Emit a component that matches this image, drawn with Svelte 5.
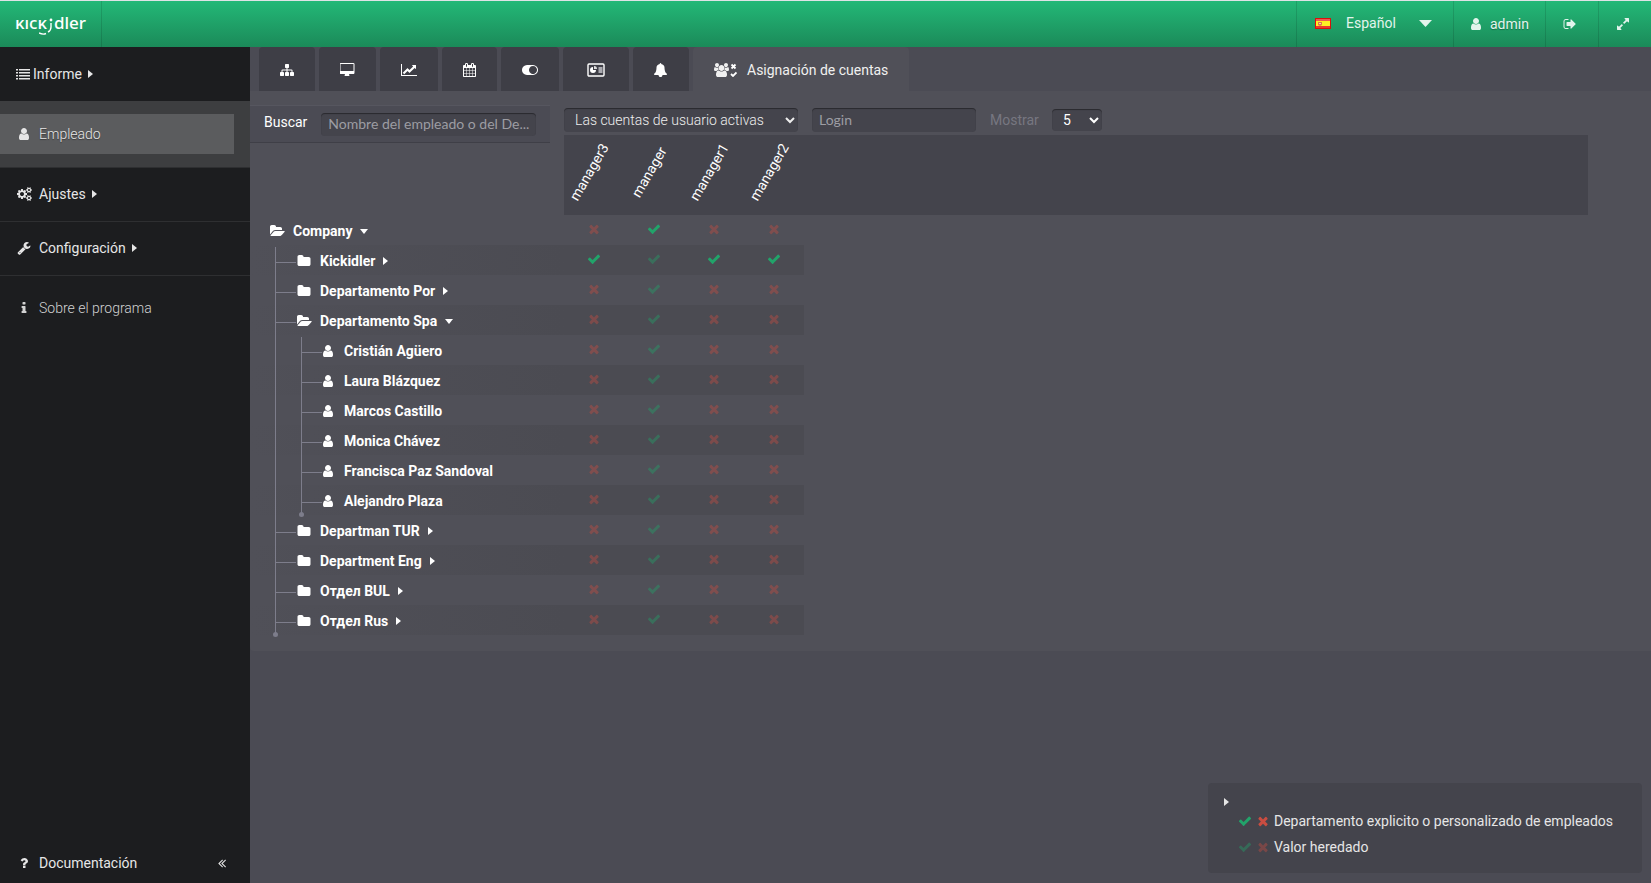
<script>
  const icons = {
    user: [1536, 'M1408 1399q0 109-62.5 187t-150.5 78h-854q-88 0-150.5-78t-62.5-187q0-85 8.5-160.5t31.5-152 58.5-131 94-89 134.5-34.5q131 128 313 128t313-128q76 0 134.5 34.5t94 89 58.5 131 31.5 152 8.5 160.5zm-256-887q0 159-112.5 271.5t-271.5 112.5-271.5-112.5-112.5-271.5 112.5-271.5 271.5-112.5 271.5 112.5 112.5 271.5z'],
    check: [1792, 'M1671 566q0 40-28 68l-724 724-136 136q-28 28-68 28t-68-28l-136-136-362-362q-28-28-28-68t28-68l136-136q28-28 68-28t68 28l294 295 656-657q28-28 68-28t68 28l136 136q28 28 28 68z'],
    times: [1792, 'M1490 1322q0 40-28 68l-136 136q-28 28-68 28t-68-28l-294-294-294 294q-28 28-68 28t-68-28l-136-136q-28-28-28-68t28-68l294-294-294-294q-28-28-28-68t28-68l136-136q28-28 68-28t68 28l294 294 294-294q28-28 68-28t68 28l136 136q28 28 28 68t-28 68l-294 294 294 294q28 28 28 68z'],
    folder: [1792, 'M1728 608v704q0 92-66 158t-158 66h-1216q-92 0-158-66t-66-158v-960q0-92 66-158t158-66h320q92 0 158 66t66 158v32h672q92 0 158 66t66 158z'],
    folderOpen: [1920, 'M1879 952q0 31-31 66l-336 396q-43 51-120.5 86.5t-143.5 35.5h-1088q-34 0-60.5-13t-26.5-43q0-31 31-66l336-396q43-51 120.5-86.5t143.5-35.5h1088q34 0 60.5 13t26.5 43zm-343-344v160h-832q-94 0-197 47.5t-164 119.5l-337 396-5 6q0-4-.5-12.5t-.5-12.5v-960q0-92 66-158t158-66h320q92 0 158 66t66 158v32h544q92 0 158 66t66 158z'],
    list: [1792, 'M0 256h256v192h-256zM384 256h1408v192h-1408zM0 640h256v192h-256zM384 640h1408v192h-1408zM0 1024h256v192h-256zM384 1024h1408v192h-1408zM0 1408h256v192h-256zM384 1408h1408v192h-1408z'],
    sitemap: [1792, 'M1792 1248v320q0 40-28 68t-68 28h-320q-40 0-68-28t-28-68v-320q0-40 28-68t68-28h96v-192h-512v192h96q40 0 68 28t28 68v320q0 40-28 68t-68 28h-320q-40 0-68-28t-28-68v-320q0-40 28-68t68-28h96v-192h-512v192h96q40 0 68 28t28 68v320q0 40-28 68t-68 28h-320q-40 0-68-28t-28-68v-320q0-40 28-68t68-28h96v-192q0-52 38-90t90-38h512v-192h-96q-40 0-68-28t-28-68v-320q0-40 28-68t68-28h320q40 0 68 28t28 68v320q0 40-28 68t-68 28h-96v192h512q52 0 90 38t38 90v192h96q40 0 68 28t28 68z'],
    desktop: [1920, 'M1728 992v-832q0-13-9.5-22.5t-22.5-9.5h-1600q-13 0-22.5 9.5t-9.5 22.5v832q0 13 9.5 22.5t22.5 9.5h1600q13 0 22.5-9.5t9.5-22.5zm128-832v1088q0 66-47 113t-113 47h-544q0 37 16 77.5t32 71 16 43.5q0 26-19 45t-45 19h-512q-26 0-45-19t-19-45q0-14 16-44t32-70 16-78h-544q-66 0-113-47t-47-113v-1088q0-66 47-113t113-47h1600q66 0 113 47t47 113z'],
    lineChart: [2048, 'M2048 1536v128h-2048v-1536h128v1408h1920zm-128-1248v435q0 21-19.5 29.5t-35.5-7.5l-121-121-633 633q-10 10-23 10t-23-10l-233-233-416 416-192-192 585-585q10-10 23-10t23 10l233 233 464-464-121-121q-16-16-7.5-35.5t29.5-19.5h435q14 0 23 9t9 23z'],
    calendar: [1664, 'M192 1664h288v-288h-288v288zm352 0h320v-288h-320v288zm-352-352h288v-320h-288v320zm352 0h320v-320h-320v320zm-352-384h288v-288h-288v288zm736 736h320v-288h-320v288zm-384-736h320v-288h-320v288zm768 736h288v-288h-288v288zm-384-352h320v-320h-320v320zm-352-864v-288q0-13-9.5-22.5t-22.5-9.5h-64q-13 0-22.5 9.5t-9.5 22.5v288q0 13 9.5 22.5t22.5 9.5h64q13 0 22.5-9.5t9.5-22.5zm736 864h288v-320h-288v320zm-384-384h320v-288h-320v288zm384 0h288v-288h-288v288zm32-480v-288q0-13-9.5-22.5t-22.5-9.5h-64q-13 0-22.5 9.5t-9.5 22.5v288q0 13 9.5 22.5t22.5 9.5h64q13 0 22.5-9.5t9.5-22.5zm384-64v1280q0 52-38 90t-90 38h-1408q-52 0-90-38t-38-90v-1280q0-52 38-90t90-38h128v-96q0-66 47-113t113-47h64q66 0 113 47t47 113v96h384v-96q0-66 47-113t113-47h64q66 0 113 47t47 113v96h128q52 0 90 38t38 90z', 64],
    toggle: [2048, 'M0 896q0-130 51-248.5t136.5-204 204-136.5 248.5-51h768q130 0 248.5 51t204 136.5 136.5 204 51 248.5-51 248.5-136.5 204-204 136.5-248.5 51h-768q-130 0-248.5-51t-204-136.5-136.5-204-51-248.5zm1408 512q104 0 198.5-40.5t163.5-109.5 109.5-163.5 40.5-198.5-40.5-198.5-109.5-163.5-163.5-109.5-198.5-40.5-198.5 40.5-163.5 109.5-109.5 163.5-40.5 198.5 40.5 198.5 109.5 163.5 163.5 109.5 198.5 40.5z'],
    bell: [1792, 'M1664 1408q0 52-38 90t-90 38h-448q0 106-75 181t-181 75-181-75-75-181h-448q-52 0-90-38t-38-90q50-42 91-88t85-119.5 74.5-158.5 50-206 19.5-260q0-152 117-282.5t307-158.5q-8-19-8-39 0-40 28-68t68-28 68 28 28 68q0 20-8 39 190 28 307 158.5t117 282.5q0 139 19.5 260t50 206 74.5 158.5 85 119.5 91 88z'],
    signOut: [1664, 'M704 1440q0 4 1 20t.5 26.5-3 23.5-10 19.5-20.5 6.5h-320q-119 0-203.5-84.5t-84.5-203.5v-704q0-119 84.5-203.5t203.5-84.5h320q13 0 22.5 9.5t9.5 22.5q0 4 1 20t.5 26.5-3 23.5-10 19.5-20.5 6.5h-320q-66 0-113 47t-47 113v704q0 66 47 113t113 47h312l11.5 1 11.5 3 8 5.5 7 9 2 13.5zm928-544q0 26-19 45l-544 544q-19 19-45 19t-45-19-19-45v-288h-448q-26 0-45-19t-19-45v-384q0-26 19-45t45-19h448v-288q0-26 19-45t45-19 45 19l544 544q19 19 19 45z'],
    expand: [1792, 'M883 1056q0 13-10 23l-332 332 144 144q19 19 19 45t-19 45-45 19h-448q-26 0-45-19t-19-45v-448q0-26 19-45t45-19 45 19l144 144 332-332q10-10 23-10t23 10l114 114q10 10 10 23zm781-864v448q0 26-19 45t-45 19-45-19l-144-144-332 332q-10 10-23 10t-23-10l-114-114q-10-10-10-23t10-23l332-332-144-144q-19-19-19-45t19-45 45-19h448q26 0 45 19t19 45z'],
    wrench: [1792, 'M448 1472q0-26-19-45t-45-19-45 19-19 45 19 45 45 19 45-19 19-45zm644-420l-682 682q-37 37-90 37-52 0-91-37l-106-108q-38-36-38-90 0-53 38-91l681-681q39 98 114.5 173.5t173.5 114.5zm634-435q0 39-23 106-47 134-164.5 217.5t-258.5 83.5q-185 0-316.5-131.5t-131.5-316.5 131.5-316.5 316.5-131.5q58 0 121.5 16.5t107.5 46.5q16 11 16 28t-16 28l-293 169v224l193 107q5-3 79-48.5t135.5-81 70.5-35.5q15 0 23.5 10t8.5 25z'],
    cogs: [1920, 'M896 896q0-106-75-181t-181-75-181 75-75 181 75 181 181 75 181-75 75-181zm768 512q0-52-38-90t-90-38-90 38-38 90q0 53 37.5 90.5t90.5 37.5 90.5-37.5 37.5-90.5zm0-1024q0-52-38-90t-90-38-90 38-38 90q0 53 37.5 90.5t90.5 37.5 90.5-37.5 37.5-90.5zm-384 421v185q0 10-7 19.5t-16 10.5l-155 24q-11 35-32 76 34 48 90 115 7 11 7 20 0 12-7 19-23 30-82.5 89.5t-78.5 59.5q-11 0-21-7l-115-90q-37 19-77 31-11 108-23 155-7 24-30 24h-186q-11 0-20-7.5t-10-17.5l-23-153q-34-10-75-31l-118 89q-7 7-20 7-11 0-21-8-144-133-144-160 0-9 7-19 10-14 41-53t47-61q-23-44-35-82l-152-24q-10-1-17-9.5t-7-19.5v-185q0-10 7-19.5t16-10.5l155-24q11-35 32-76-34-48-90-115-7-11-7-20 0-12 7-20 22-30 82-89t79-59q11 0 21 7l115 90q34-18 77-32 11-108 23-154 7-24 30-24h186q11 0 20 7.5t10 17.5l23 153q34 10 75 31l118-89q8-7 20-7 11 0 21 8 144 133 144 160 0 8-7 19-12 16-42 54t-45 60q23 48 34 82l152 23q10 2 17 10.5t7 19.5zm640 533v140q0 16-149 31-12 27-30 52 51 113 51 138 0 4-4 7-122 71-124 71-8 0-46-47t-52-68q-20 2-30 2t-30-2q-14 21-52 68t-46 47q-2 0-124-71-4-3-4-7 0-25 51-138-18-25-30-52-149-15-149-31v-140q0-16 149-31 13-29 30-52-51-113-51-138 0-4 4-7 4-2 35-20t59-34 30-16q8 0 46 46.5t52 67.5q20-2 30-2t30 2q51-71 92-112l6-2q4 0 124 70 4 3 4 7 0 25-51 138 17 23 30 52 149 15 149 31zm0-1024v140q0 16-149 31-12 27-30 52 51 113 51 138 0 4-4 7-122 71-124 71-8 0-46-47t-52-68q-20 2-30 2t-30-2q-14 21-52 68t-46 47q-2 0-124-71-4-3-4-7 0-25 51-138-18-25-30-52-149-15-149-31v-140q0-16 149-31 13-29 30-52-51-113-51-138 0-4 4-7 4-2 35-20t59-34 30-16q8 0 46 46.5t52 67.5q20-2 30-2t30 2q51-71 92-112l6-2q4 0 124 70 4 3 4 7 0 25-51 138 17 23 30 52 149 15 149 31z'],
    info: [1792, 'M1216 1344v128q0 26-19 45t-45 19h-512q-26 0-45-19t-19-45v-128q0-26 19-45t45-19h64v-384h-64q-26 0-45-19t-19-45v-128q0-26 19-45t45-19h384q26 0 45 19t19 45v576h64q26 0 45 19t19 45zm-128-1152v192q0 26-19 45t-45 19h-256q-26 0-45-19t-19-45v-192q0-26 19-45t45-19h256q26 0 45 19t19 45z'],
    question: [1792, 'M1088 1256v240q0 16-12 28t-28 12h-240q-16 0-28-12t-12-28v-240q0-16 12-28t28-12h240q16 0 28 12t12 28zm316-600q0 54-15.5 101t-35 76.5-55 59.5-57.5 43.5-61 35.5q-41 23-68.5 65t-27.5 67q0 17-12 32.5t-28 15.5h-240q-15 0-25.5-18.5t-10.5-37.5v-45q0-83 65-156.5t143-108.5q59-27 84-56t25-76q0-42-46.5-74t-107.5-32q-65 0-108 29-35 25-107 115-13 16-31 16-12 0-25-8l-164-125q-13-10-15.5-25t5.5-28q160-266 464-266 80 0 161 31t146 83 106 127.5 41 158.5z'],
    collapse: [1792, 'M1011 1376q0 13-10 23l-50 50q-10 10-23 10t-23-10l-466-466q-10-10-10-23t10-23l466-466q10-10 23-10t23 10l50 50q10 10 10 23t-10 23l-393 393 393 393q10 10 10 23zm384 0q0 13-10 23l-50 50q-10 10-23 10t-23-10l-466-466q-10-10-10-23t10-23l466-466q10-10 23-10t23 10l50 50q10 10 10 23t-10 23l-393 393 393 393q10 10 10 23z'],
    users: [1920, 'M593 896q-162 5-265 128h-134q-82 0-138-40.5t-56-118.5q0-353 124-353 6 0 43.5 21t97.5 42.5 119 21.5q67 0 133-23-5 37-5 66 0 139 81 256zm1071 637q0 120-73 189.5t-194 69.5h-874q-121 0-194-69.5t-73-189.5q0-53 3.5-103.5t14-109 26.5-108.5 43-97.5 62-81 85.5-53.5 111.5-20q10 0 43 21.5t73 48 107 48 135 21.5 135-21.5 107-48 73-48 43-21.5q61 0 111.5 20t85.5 53.5 62 81 43 97.5 26.5 108.5 14 109 3.5 103.5zm-1024-1277q0 106-75 181t-181 75-181-75-75-181 75-181 181-75 181 75 75 181zm704 384q0 159-112.5 271.5t-271.5 112.5-271.5-112.5-112.5-271.5 112.5-271.5 271.5-112.5 271.5 112.5 112.5 271.5zm576 225q0 78-56 118.5t-138 40.5h-134q-103-123-265-128 81-117 81-256 0-29-5-66 66 23 133 23 59 0 119-21.5t97.5-42.5 43.5-21q124 0 124 353zm-128-609q0 106-75 181t-181 75-181-75-75-181 75-181 181-75 181 75 75 181z']
  };

  const tabs = [
    { icon: 'sitemap', label: 'Estructura' },
    { icon: 'desktop', label: 'Equipos' },
    { icon: 'lineChart', label: 'Productividad' },
    { icon: 'calendar', label: 'Calendario' },
    { icon: 'toggle', label: 'Interruptores' },
    { icon: 'card', label: 'Tarjeta' },
    { icon: 'bell', label: 'Avisos' }
  ];

  const managers = ['manager3', 'manager', 'manager1', 'manager2'];

  // Marks: c = check, x = cross; upper case is explicit, lower case is inherited.
  const rows = [
    { name: 'Company', level: 0, kind: 'open', marks: 'xCxx' },
    { name: 'Kickidler', level: 1, kind: 'closed', marks: 'CcCC' },
    { name: 'Departamento Por', level: 1, kind: 'closed', marks: 'xcxx' },
    { name: 'Departamento Spa', level: 1, kind: 'open', marks: 'xcxx' },
    { name: 'Cristián Agüero', level: 2, kind: 'user', marks: 'xcxx' },
    { name: 'Laura Blázquez', level: 2, kind: 'user', marks: 'xcxx' },
    { name: 'Marcos Castillo', level: 2, kind: 'user', marks: 'xcxx' },
    { name: 'Monica Chávez', level: 2, kind: 'user', marks: 'xcxx' },
    { name: 'Francisca Paz Sandoval', level: 2, kind: 'user', marks: 'xcxx' },
    { name: 'Alejandro Plaza', level: 2, kind: 'user', marks: 'xcxx' },
    { name: 'Departman TUR', level: 1, kind: 'closed', marks: 'xcxx' },
    { name: 'Department Eng', level: 1, kind: 'closed', marks: 'xcxx' },
    { name: 'Отдел BUL', level: 1, kind: 'closed', marks: 'xcxx' },
    { name: 'Отдел Rus', level: 1, kind: 'closed', marks: 'xcxx' }
  ];

  const indent = [19, 46, 72];
  const rowIcon = { open: 'folderOpen', closed: 'folder', user: 'user' };
  const startsBranch = (i, level) => rows[i].level === level && rows[i - 1].level === level - 1;
  const endsBranch = (i, level) => !rows.slice(i + 1).some((r, n, rest) => r.level >= level && rest.slice(0, n).every((p) => p.level >= level));
</script>

{#snippet icon(name)}
  <svg class="icon" width={icons[name][0] / 128} height="14" viewBox="{icons[name][2] ?? 0} 0 {icons[name][0]} 1792" aria-hidden="true"><path d={icons[name][1]} /></svg>
{/snippet}

{#snippet caretRight()}
  <svg class="icon caret" width="5" height="8" viewBox="0 0 5 8" aria-hidden="true"><path d="M0 0L5 4L0 8Z" /></svg>
{/snippet}

{#snippet caretDown()}
  <svg class="icon caret" width="8" height="5" viewBox="0 0 8 5" aria-hidden="true"><path d="M0 0H8L4 5Z" /></svg>
{/snippet}

{#snippet mark(code)}
  <span class="mark" class:faded={code === code.toLowerCase()} class:no={code.toLowerCase() === 'x'}>
    {@render icon(code.toLowerCase() === 'c' ? 'check' : 'times')}
  </span>
{/snippet}

<header>
  <a class="logo" href="#home" aria-label="Kickidler">
    <span class="caps">ĸıcĸ</span><svg class="smile" width="14" height="18" viewBox="0 0 14 18" aria-hidden="true">
      <circle cx="12" cy="3" r="1.4" fill="#fff" />
      <path d="M12 6v4c0 3-1 4-3 5M0 16q4 2 7 .5" fill="none" stroke="#fff" stroke-width="1.4" />
    </svg><span class="tall">dler</span>
  </a>
  <button class="head-item lang">
    <svg width="16" height="11" viewBox="0 0 16 11" aria-hidden="true">
      <rect width="16" height="11" fill="#d9110c" />
      <rect x="1" y="1" width="14" height="2" fill="#ee5a50" />
      <rect x="1" y="3" width="14" height="5" fill="#fdf024" />
      <rect x="1" y="8" width="14" height="2" fill="#e8392f" />
      <path d="M3 4h4v3l-2 1-2-1z" fill="#e0784a" />
      <path d="M4 5h2v1H4z" fill="#f4d0b8" />
    </svg>
    <span>Español</span>
    <svg class="icon arrow" width="13" height="7" viewBox="0 0 13 7" aria-hidden="true"><path d="M0 0H13L6.5 7Z" /></svg>
  </button>
  <a class="head-item admin" href="#admin">{@render icon('user')}<span>admin</span></a>
  <button class="head-item exit" aria-label="Salir">{@render icon('signOut')}</button>
  <button class="head-item full" aria-label="Pantalla completa">{@render icon('expand')}</button>
</header>

<div class="page">
  <nav class="side">
    <a class="side-item first" href="#informe">{@render icon('list')}<span>Informe</span>{@render caretRight()}</a>
    <div class="sub">
      <a class="sub-item" href="#empleado"><span class="slot">{@render icon('user')}</span><span>Empleado</span></a>
    </div>
    <a class="side-item" href="#ajustes"><span class="slot">{@render icon('cogs')}</span><span>Ajustes</span>{@render caretRight()}</a>
    <a class="side-item" href="#configuracion"><span class="slot">{@render icon('wrench')}</span><span>Configuración</span>{@render caretRight()}</a>
    <a class="side-item about" href="#sobre"><span class="slot">{@render icon('info')}</span><span>Sobre el programa</span></a>
    <div class="side-foot">
      <a class="side-item docs" href="#documentacion"><span class="slot">{@render icon('question')}</span><span>Documentación</span></a>
      <button class="fold" aria-label="Contraer">{@render icon('collapse')}</button>
    </div>
  </nav>

  <main>
    <div class="tabs">
      {#each tabs as tab}
        <button class="tab" aria-label={tab.label}>
          {#if tab.icon === 'card'}
            <svg width="24" height="14" viewBox="0 0 24 14" aria-hidden="true">
              <rect x="4" y="1" width="16" height="12" rx="1" fill="none" stroke="#fff" stroke-width="1.4" />
              <path d="M9 4A3 3 0 1 0 12 7H9Z" fill="#fff" />
              <path d="M10 3A3 3 0 0 1 13 6H10Z" fill="#ddd" />
              <rect x="14.5" y="4" width="4" height="6" fill="#aaaab0" />
            </svg>
          {:else}
            {@render icon(tab.icon)}
          {/if}
        </button>
      {/each}
      <button class="tab active">
        <svg class="icon" width="23" height="14" viewBox="0 0 23 14" aria-hidden="true">
          <svg width="15" height="14" viewBox="0 0 1920 1792"><path d={icons.users[1]} /></svg>
          <path d="M17.5 1.5l4 4M21.5 1.5l-4 4M17 11l2 2 3.5-3.5" fill="none" stroke="#fff" stroke-width="1.8" />
        </svg>
        <span>Asignación de cuentas</span>
      </button>
    </div>

    <section class="panel">
      <form class="filters">
        <div class="search">
          <label for="find">Buscar</label>
          <input id="find" type="text" placeholder="Nombre del empleado o del De..." />
        </div>
        <select class="accounts" aria-label="Cuentas">
          <option>Las cuentas de usuario activas</option>
        </select>
        <input class="login" type="text" placeholder="Login" aria-label="Login" />
        <label class="show" for="count">Mostrar</label>
        <select class="count" id="count">
          <option>5</option>
        </select>
      </form>

      <table>
        <thead>
          <tr>
            <td class="corner"></td>
            {#each managers as manager}
              <th class="manager" scope="col"><span>{manager}</span></th>
            {/each}
            <td class="rest"></td>
          </tr>
        </thead>
        <tbody>
          {#each rows as row, i}
            <tr>
              <th class="node" scope="row">
                <div class="branch">
                  <svg class="guide" width={indent[row.level]} height="30" aria-hidden="true">
                    {#if row.level > 0}
                      <rect x="25" y={i === 1 ? 2 : 0} width="1" height={i === 1 ? 28 : 30} />
                      <rect x={indent[row.level] - 21} y="17" width="21" height="1" />
                      {#if endsBranch(i, 1)}<circle cx="25.5" cy="29.5" r="2.5" />{/if}
                    {/if}
                    {#if row.level > 1}
                      <rect x="51" y={startsBranch(i, 2) ? 2 : 0} width="1" height={startsBranch(i, 2) ? 28 : 30} />
                      {#if endsBranch(i, 2)}<circle cx="51.5" cy="29.5" r="2.5" />{/if}
                    {/if}
                  </svg>
                  <span class="node-label">
                    <span class="node-icon" class:person={row.kind === 'user'}>{@render icon(rowIcon[row.kind])}</span>
                    <button class="name">
                      {row.name}
                      {#if row.kind === 'open'}{@render caretDown()}{:else if row.kind === 'closed'}{@render caretRight()}{/if}
                    </button>
                  </span>
                </div>
              </th>
              {#each row.marks as code}
                <td class="cell">{@render mark(code)}</td>
              {/each}
              <td></td>
            </tr>
          {/each}
        </tbody>
      </table>
    </section>

    <aside class="legend">
      <button class="legend-toggle" aria-label="Leyenda">{@render caretRight()}</button>
      <p>{@render mark('C')}{@render mark('X')}<span>Departamento explicito o personalizado de empleados</span></p>
      <p>{@render mark('c')}{@render mark('x')}<span>Valor heredado</span></p>
    </aside>
  </main>
</div>

<style>
  :global(*) { box-sizing: border-box; }
  :global(body) { margin: 0; background: #4b4b54; }
  :global(#app) {
    display: flex;
    flex-direction: column;
    min-height: 100vh;
    font: 14px/20px Roboto, "Open Sans", sans-serif;
    color: #fff;
  }
  a { color: inherit; text-decoration: none; }
  button { border: 0; padding: 0; background: none; color: inherit; font: inherit; cursor: pointer; }
  svg { display: block; flex: none; }
  .icon { fill: currentColor; }

  header {
    display: flex;
    height: 47px;
    border-top: 1px solid #dfe3e6;
    background: linear-gradient(#23b877, #1b8a59);
    text-shadow: 0 1px 1px rgba(0, 0, 0, .3);
    color: #e2f4ec;
  }
  .logo {
    display: flex;
    align-items: center;
    width: 102px;
    margin-right: auto;
    padding: 0 0 2px 15px;
    border-right: 1px solid rgba(0, 0, 0, .12);
    color: #fff;
    text-shadow: none;
    font-family: "Noto Sans", sans-serif;
    font-size: 17px;
    font-weight: 500;
  }
  .smile { margin: 6px 1px 0 -8px; }
  .head-item {
    display: flex;
    align-items: center;
    border-left: 1px solid rgba(0, 0, 0, .12);
  }
  .lang { width: 157px; padding: 0 0 2px 18px; }
  .lang span { margin: 0 23px 0 15px; }
  .admin { width: 92px; padding-left: 16px; gap: 8px; }
  .exit { width: 53px; padding-left: 17px; }
  .full { width: 53px; padding-left: 17px; }

  .page { display: flex; flex: 1; }

  .side {
    display: flex;
    flex-direction: column;
    width: 250px;
    flex: none;
    background: #1c1d1f;
    color: #e6e6e6;
  }
  .side-item {
    display: flex;
    align-items: center;
    height: 54px;
    padding: 0 0 2px 16px;
    border-bottom: 1px solid #2e2f31;
  }
  .side-item .caret { margin-left: 6px; }
  .first { gap: 3px; padding-bottom: 0; border: 0; }
  .first .caret { margin-left: 3px; }
  .slot { display: flex; justify-content: center; width: 16px; margin-right: 7px; }
  .sub {
    padding: 13px 16px 13px 0;
    background: #3d3e40;
    border-bottom: 1px solid #2e2f31;
  }
  .sub-item {
    display: flex;
    align-items: center;
    height: 40px;
    padding-left: 16px;
    background: #5b5c5e;
    font-weight: 300;
    text-shadow: 0 1px 1px rgba(0, 0, 0, .4);
  }
  .about { height: 66px; border: 0; font-weight: 300; color: #d2d2d2; }
  .side-foot { display: flex; align-items: center; margin-top: auto; height: 40px; }
  .docs { flex: 1; padding-bottom: 0; border: 0; }
  .fold { margin-right: 21px; }

  main { display: flex; flex-direction: column; flex: 1; min-width: 0; }
  .tabs { display: flex; gap: 4px; padding-left: 9px; }
  .tab {
    display: flex;
    align-items: center;
    height: 44px;
    padding: 2px 21px 0;
    background: #3e3e46;
    border-radius: 4px 4px 0 0;
  }
  .active { gap: 10px; background: #505058; color: #f0f0f0; }

  .panel { padding-bottom: 16px; background: #505058; border-radius: 0 0 0 4px; }
  .filters { display: flex; align-items: flex-start; height: 44px; padding-top: 17px; }
  .search {
    display: flex;
    align-items: center;
    gap: 14px;
    position: relative;
    width: 300px;
    height: 38px;
    margin: -3px 14px 0 0;
    padding: 0 14px 4px;
    background: #4b4b54;
    border-top: 1px solid #56565f;
    border-bottom: 1px solid #3f3f47;
  }
  input, select {
    min-width: 0;
    height: 24px;
    border: 0;
    border-radius: 4px;
    background-color: #44444c;
    box-shadow: inset 0 1px 1px rgba(0, 0, 0, .4);
    color: #eee;
    outline: 0;
  }
  input { padding: 0 2px 1px 7px; font: 14px Lato, sans-serif; text-overflow: ellipsis; }
  input::placeholder { color: #9d9da3; opacity: 1; }
  .search input { flex: 1; height: 23px; margin-top: 4px; }
  select { font: inherit; }
  .accounts { width: 234px; padding-left: 7px; font-weight: 300; margin-right: 14px; }
  .login { width: 164px; margin-right: 14px; }
  .show { width: 48px; margin: 2px 14px 0 0; color: #777781; }
  .count { width: 50px; height: 22px; margin-top: 1px; padding-left: 7px; color: #fff; }

  table { width: calc(100% - 63px); table-layout: fixed; border-collapse: collapse; }
  td, th { padding: 0; }
  .corner { width: 314px; }
  thead tr { height: 80px; }
  .manager, .rest { background: #44444c; }
  .manager { width: 60px; padding-bottom: 6px; font-weight: 400; }
  .manager span { display: flex; justify-content: center; width: 50px; transform: rotate(-60deg); }
  tbody tr { height: 30px; }
  .node { text-align: left; }
  tbody tr:nth-child(even) .node { background: linear-gradient(to right, rgba(75, 75, 82, 0), #4b4b52); }
  tbody tr:nth-child(even) .cell { background: #4b4b52; }
  .branch { display: flex; height: 30px; }
  .guide { fill: #7d7d8b; overflow: visible; }
  .node-label { display: flex; align-items: center; padding-top: 2px; }
  .node-icon { display: flex; justify-content: center; width: 16px; margin-right: 8px; }
  .person { width: 12px; margin-right: 10px; }
  .name { display: flex; align-items: center; gap: 8px; font-weight: 700; }
  .mark { display: flex; justify-content: center; color: #22a36a; }
  .mark.no { color: #c94d41; }
  .mark.faded { opacity: .4; }
  .cell { padding-bottom: 2px; }

  .legend {
    align-self: flex-end;
    width: 434px;
    height: 90px;
    margin: auto 9px 10px 0;
    padding: 15px 16px;
    background: #44444c;
    border-radius: 4px;
    color: #e6e6e6;
  }
  .legend-toggle { display: block; }
  .legend p { display: flex; align-items: center; gap: 4px; margin: 4px 0 0 14px; height: 22px; }
</style>
